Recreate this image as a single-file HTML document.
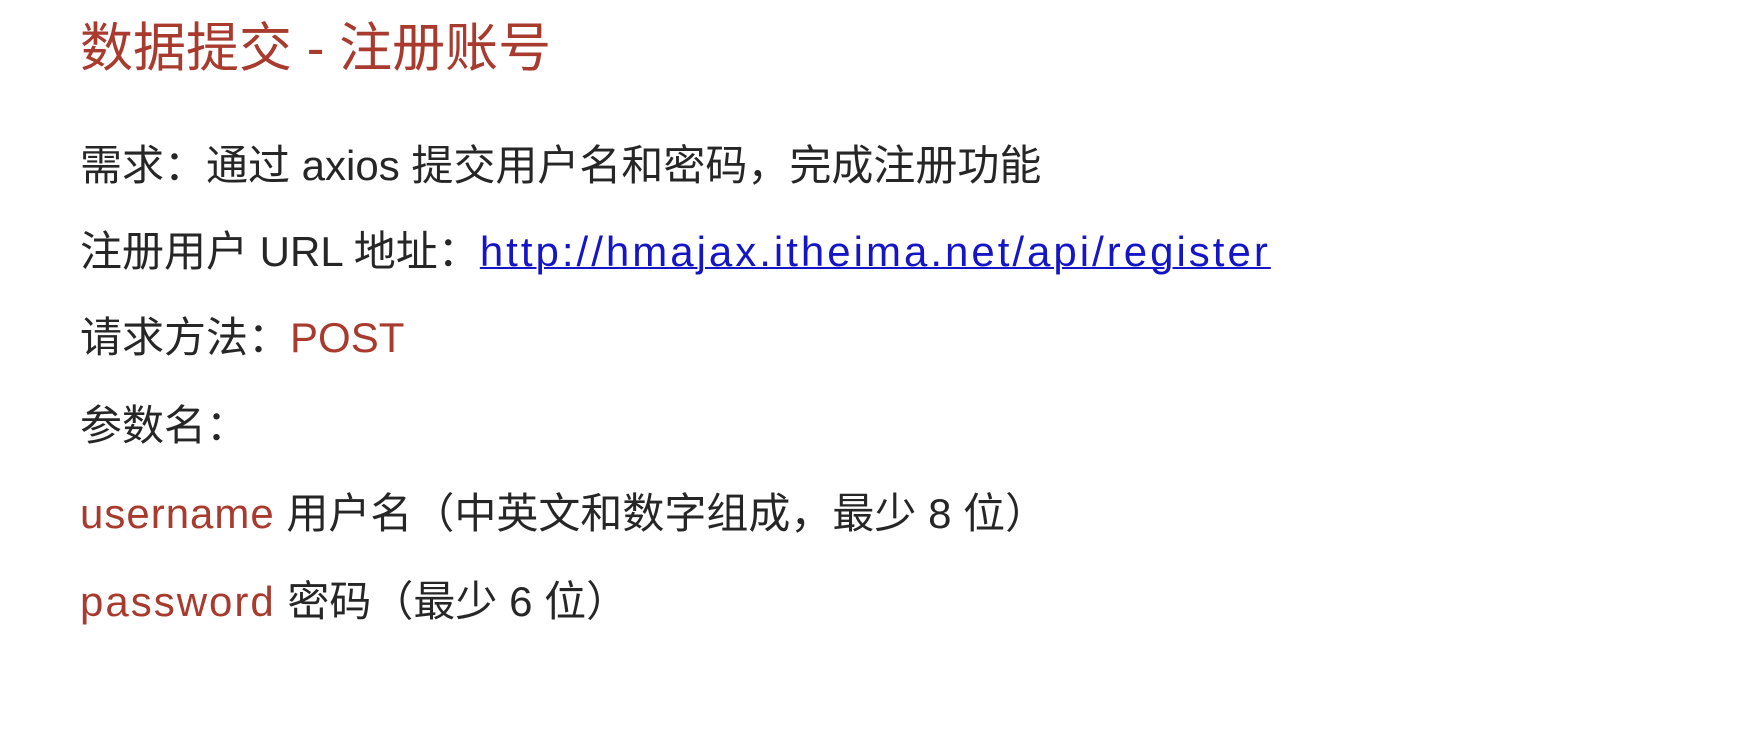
<!DOCTYPE html>
<html><head><meta charset="utf-8"><style>
html,body{margin:0;padding:0;background:#fff;width:1751px;height:753px;overflow:hidden}
.l{position:absolute;left:80px;white-space:nowrap;font-family:"Liberation Sans","Noto Sans CJK SC",sans-serif;color:#262626;font-size:42px;line-height:60px;height:60px}
.t{font-size:53px;color:#a83a2e;line-height:70px;height:70px}
.r{color:#a83a2e;letter-spacing:2px}
a{color:#1515c8;text-decoration:underline;text-decoration-thickness:2px;letter-spacing:3px}
</style></head><body>
<div class="l t" style="top:14px">数据提交 - 注册账号</div>
<div class="l" style="top:136px">需求：通过 axios 提交用户名和密码，完成注册功能</div>
<div class="l" style="top:222px">注册用户 URL 地址：<a>http://hmajax.itheima.net/api/register</a></div>
<div class="l" style="top:308px">请求方法：<span class="r" style="letter-spacing:0">POST</span></div>
<div class="l" style="top:396px">参数名：</div>
<div class="l" style="top:484px"><span class="r" style="letter-spacing:1px">username</span> 用户名（中英文和数字组成，最少 8 位）</div>
<div class="l" style="top:572px"><span class="r">password</span> 密码（最少 6 位）</div>
</body></html>
